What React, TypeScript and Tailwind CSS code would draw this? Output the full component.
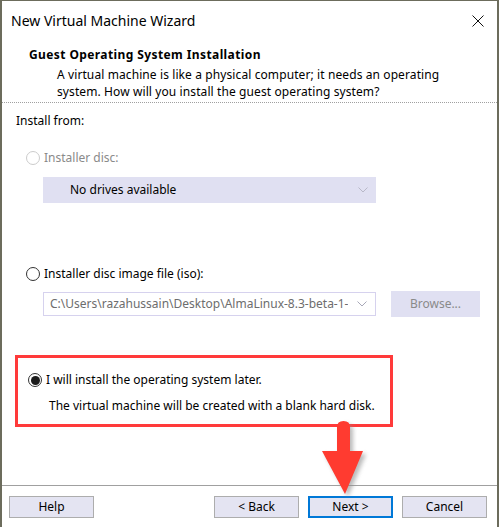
import React from 'react';

const font = { fontFamily: '"Noto Sans", "Liberation Sans", sans-serif' };

function Radio({ checked, disabled }: { checked?: boolean; disabled?: boolean }) {
  return (
    <div
      className={`w-[14px] h-[14px] rounded-full border flex items-center justify-center bg-white ${
        disabled ? 'border-[#cccccc]' : 'border-[#333333]'
      }`}
    >
      {checked && <div className="w-[9px] h-[9px] rounded-full bg-[#1c1c1c]" />}
    </div>
  );
}

function Btn({ label, primary }: { label: string; primary?: boolean }) {
  return (
    <div
      className={`w-[85px] h-[22px] flex items-center justify-center text-[12px] text-black bg-[#e4e4f2] ${
        primary ? 'border-2 border-[#0078d7]' : 'border border-[#adadad]'
      }`}
    >
      {label}
    </div>
  );
}

function Chevron({ color }: { color: string }) {
  return (
    <svg width="10" height="6" viewBox="0 0 10 6">
      <path d="M0.5 0.5 L5 5 L9.5 0.5" fill="none" stroke={color} strokeWidth="1" />
    </svg>
  );
}

export default function App() {
  return (
    <div className="w-[499px] h-[527px] bg-white relative overflow-hidden" style={font}>
      <div className="w-full h-full border-l-2 border-t border-r-2 border-[#6c6c5c] flex flex-col">
        {/* Title bar */}
        <div className="h-[39px] flex items-center justify-between pl-[9px] pr-[13px]">
          <span className="text-[14px] text-black">New Virtual Machine Wizard</span>
          <svg width="12" height="12" viewBox="0 0 12 12">
            <path d="M0.5 0.5 L11.5 11.5 M11.5 0.5 L0.5 11.5" stroke="#111" strokeWidth="1" />
          </svg>
        </div>

        {/* Header */}
        <div className="pl-[27px] pt-[7px] h-[62px]">
          <div className="text-[12px] font-bold leading-[16px] tracking-[0.4px] text-black">
            Guest Operating System Installation
          </div>
          <div className="pl-[28px] mt-[3px] text-[12px] leading-[17px] tracking-[0.1px] text-black">
            A virtual machine is like a physical computer; it needs an operating
            <br />
            system. How will you install the guest operating system?
          </div>
        </div>
        <div className="border-t border-dotted border-[#a0a0a0]" />

        {/* Body */}
        <div className="pl-[14px] pt-[10px] flex-1 text-[12px] leading-[16px] text-black">
          <div>Install from:</div>

          <div className="mt-[21px] pl-[10px] flex items-center gap-[4px]">
            <Radio disabled />
            <span className="text-[#8a8a8a]">Installer disc:</span>
          </div>

          <div className="mt-[11px] ml-[27px] w-[333px] h-[26px] bg-[#e0e0f2] flex items-center justify-between pl-[27px] pr-[8px]">
            <span>No drives available</span>
            <Chevron color="#b8b8c8" />
          </div>

          <div className="mt-[63px] pl-[10px] flex items-center gap-[4px]">
            <Radio />
            <span>Installer disc image file (iso):</span>
          </div>

          <div className="mt-[9px] ml-[27px] flex items-center gap-[15px]">
            <div className="w-[333px] h-[24px] border border-[#d6d2ee] bg-white flex items-center justify-between pl-[6px] pr-[8px]">
              <span className="text-[#6d6d6d] whitespace-nowrap overflow-hidden">
                C:\Users\razahussain\Desktop\AlmaLinux-8.3-beta-1-
              </span>
              <Chevron color="#a8a8b8" />
            </div>
            <div className="w-[89px] h-[26px] bg-[#e0e0f2] flex items-center justify-center text-[#8a8a8a]">
              Browse...
            </div>
          </div>

          <div className="mt-[38px] -ml-[1px] w-[378px] h-[72px] border-[3px] border-[#ff3a3a] pt-[14px] pl-[10px]">
            <div className="flex items-center gap-[4px]">
              <Radio checked />
              <span>I will install the operating system later.</span>
            </div>
            <div className="mt-[10px] pl-[21px]">
              The virtual machine will be created with a blank hard disk.
            </div>
          </div>
        </div>

        <div className="border-t border-[#a0a0a0]" />
        <div className="h-[41px] flex items-start pt-[10px] pl-[7px] pr-[10px]">
          <Btn label="Help" />
          <div className="flex-1" />
          <div className="flex gap-[9px]">
            <Btn label="< Back" />
            <Btn label="Next >" primary />
            <Btn label="Cancel" />
          </div>
        </div>
      </div>

      {/* Annotation arrow */}
      <svg className="absolute left-[316px] top-[417px]" width="58" height="84" viewBox="0 0 58 84">
        <defs>
          <filter id="sh" x="-30%" y="-30%" width="160%" height="160%">
            <feGaussianBlur stdDeviation="2" />
          </filter>
        </defs>
        <g transform="translate(3 3)" fill="#8c8c8c" opacity="0.6" filter="url(#sh)">
          <path d="M21 10 Q21 4 27.5 4 Q34 4 34 10 L34 34 L47 34 L29 77 L6 34 L21 34 Z" />
        </g>
        <path d="M21 10 Q21 4 27.5 4 Q34 4 34 10 L34 34 L47 34 L29 77 L6 34 L21 34 Z" fill="#ff3b30" />
      </svg>
    </div>
  );
}
